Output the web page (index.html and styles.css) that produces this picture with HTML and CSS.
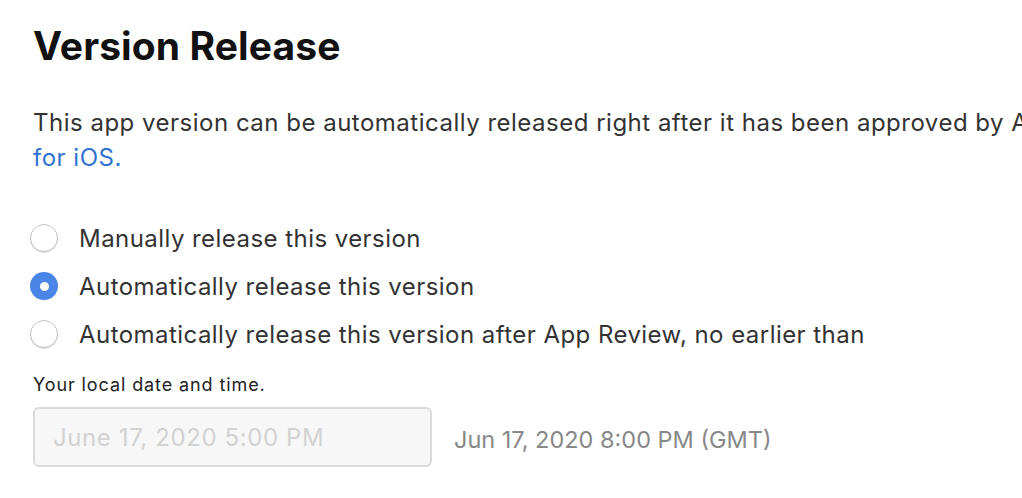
FILE: index.html
```html
<!DOCTYPE html>
<html lang="en">
<head>
<meta charset="utf-8">
<title>Version Release</title>
<link rel="stylesheet" href="styles.css">
</head>
<body>
<main class="page">
  <h1 class="title">Version Release</h1>
  <p class="intro">This app version can be automatically released right after it has been approved by App Review. <a class="link" href="#">Learn more about release options<br>for iOS.</a></p>
  <div class="options">
    <label class="option"><span class="radio"></span><span class="option-text">Manually release this version</span></label>
    <label class="option"><span class="radio checked"></span><span class="option-text">Automatically release this version</span></label>
    <label class="option"><span class="radio"></span><span class="option-text">Automatically release this version after App Review, no earlier than</span></label>
  </div>
  <div class="datetime">
    <div class="hint">Your local date and time.</div>
    <div class="date-row">
      <div class="input">June 17, 2020 5:00 PM</div>
      <div class="gmt">Jun 17, 2020 8:00 PM (GMT)</div>
    </div>
  </div>
</main>
</body>
</html>
```

FILE: styles.css
```css
html, body {
  margin: 0;
  padding: 0;
  background: #ffffff;
  overflow: hidden;
}
body {
  font-family: Inter, "Noto Sans", sans-serif;
  color: #333333;
}
.page {
  width: 1000px;
  padding: 22px 0 0 33px;
}
.title {
  margin: 0;
  font-size: 39px;
  font-weight: 700;
  color: #111111;
  line-height: 48px;
  letter-spacing: 0.1px;
}
.intro {
  white-space: nowrap;
  margin: 35px 0 0 0;
  font-size: 24px;
  line-height: 35px;
  letter-spacing: 0.5px;
  color: #333333;
}
.link {
  color: #2f72d1;
  text-decoration: none;
}
.options {
  margin-top: 39px;
  margin-left: -3px;
  display: flex;
  flex-direction: column;
}
.option {
  display: flex;
  align-items: center;
  height: 48px;
  gap: 21px;
}
.radio {
  box-sizing: border-box;
  width: 28px;
  height: 28px;
  border-radius: 50%;
  border: 1px solid #c4c4c4;
  background: #ffffff;
  box-shadow: 0 1px 1px rgba(0,0,0,0.12);
  flex: none;
  display: flex;
  align-items: center;
  justify-content: center;
}
.radio.checked {
  border: none;
  background: #4a86e8;
  box-shadow: none;
}
.radio.checked::after {
  content: "";
  width: 9px;
  height: 9px;
  border-radius: 50%;
  background: #ffffff;
}
.option-text {
  font-size: 24px;
  color: #333333;
  letter-spacing: 0.45px;
}
.datetime {
  margin-top: 15px;
}
.hint {
  font-size: 18px;
  color: #222222;
  line-height: 24px;
  letter-spacing: 0.9px;
}
.date-row {
  margin-top: 10px;
  display: flex;
  align-items: center;
  gap: 22px;
}
.input {
  box-sizing: border-box;
  width: 399px;
  height: 60px;
  border: 2px solid #dadada;
  border-radius: 6px;
  background: #f7f7f7;
  color: #d2d2d2;
  font-size: 24px;
  letter-spacing: 0.6px;
  padding: 0 0 0 18px;
  display: flex;
  align-items: center;
}
.gmt {
  font-size: 23.5px;
  color: #888888;
  padding-top: 4px;
}
```
